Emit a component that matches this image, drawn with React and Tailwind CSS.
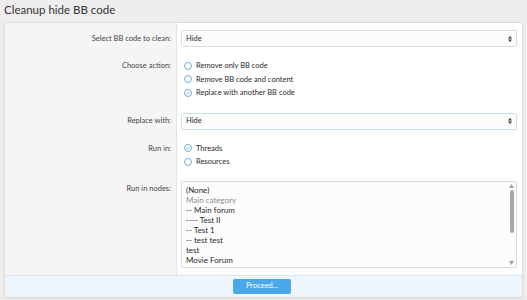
import React from "react";

const Radio = ({ checked, label }) => (
  <label className="flex items-center h-[13.5px] gap-[4px]">
    <span className="w-[8px] h-[8px] rounded-full border border-[#6fb0dc] bg-white flex items-center justify-center">
      {checked && (
        <svg width="6" height="6" viewBox="0 0 6 6">
          <path d="M1.2 3.1 L2.5 4.3 L4.8 1.8" fill="none" stroke="#6fb0dc" strokeWidth="0.9" />
        </svg>
      )}
    </span>
    <span>{label}</span>
  </label>
);

const Select = ({ value, focus }) => (
  <div
    className={`h-[17px] flex items-center justify-between border rounded-[2px] bg-[#fcfcfc] pl-[4px] pr-[4px] ${
      focus ? "border-[#c9e0ea]" : "border-[#dcdcdc]"
    }`}
  >
    <span>{value}</span>
    <svg width="4" height="6" viewBox="0 0 4 6">
      <path d="M0 2.5 L2 0 L4 2.5 Z M0 3.5 L2 6 L4 3.5 Z" fill="#333" />
    </svg>
  </div>
);

const Row = ({ label, children, className = "" }) => (
  <div className={`grid grid-cols-[172px_1fr] ${className}`}>
    <div className="bg-[#f5f5f5] border-r border-[#e4e4e4] text-right pr-[5px] text-[#444]">
      {label}
    </div>
    <div className="pl-[4px] pr-[5px]">{children}</div>
  </div>
);

const nodes = [
  { t: "(None)" },
  { t: "Main category", muted: true },
  { t: "-- Main forum" },
  { t: "---- Test II" },
  { t: "-- Test 1" },
  { t: "-- test test" },
  { t: "test" },
  { t: "Movie Forum" },
];

export default function App() {
  return (
    <div className="w-[527px] h-[300px] bg-[#eeeeee] overflow-hidden text-[#2a2a2a] text-[7.5px] font-['Lato',sans-serif]">
      <h1 className="px-[4px] h-[22px] flex items-center text-[11.5px] text-[#333] leading-none pb-[2px]">
        Cleanup hide BB code
      </h1>
      <div className="mx-[4px] border border-[#dcdcdc] bg-white shadow-[0_1px_2px_rgba(0,0,0,0.06)]">
        <Row
          label={<div className="h-[17px] flex items-center justify-end">Select BB code to clean:</div>}
          className="[&>div]:pt-[7px] [&>div]:pb-[6px]"
        >
          <Select value="Hide" />
        </Row>
        <Row
          label={<div className="h-[13.5px] flex items-center justify-end">Choose action:</div>}
          className="[&>div]:pt-[6px] [&>div]:pb-[7px]"
        >
          <div className="pl-[3px]">
            <Radio label="Remove only BB code" />
            <Radio label="Remove BB code and content" />
            <Radio checked label="Replace with another BB code" />
          </div>
        </Row>
        <Row
          label={<div className="h-[17px] flex items-center justify-end">Replace with:</div>}
          className="[&>div]:pt-[6px] [&>div]:pb-[6px]"
        >
          <Select value="Hide" focus />
        </Row>
        <Row
          label={<div className="h-[13.5px] flex items-center justify-end">Run in:</div>}
          className="[&>div]:pt-[6px] [&>div]:pb-[6px]"
        >
          <div className="pl-[3px]">
            <Radio checked label="Threads" />
            <Radio label="Resources" />
          </div>
        </Row>
        <Row
          label={<div className="h-[13px] pt-[3px] flex items-center justify-end">Run in nodes:</div>}
          className="[&>div]:pt-[6px] [&>div]:pb-[7px]"
        >
          <div className="h-[87px] border border-[#dcdcdc] rounded-[2px] bg-[#fcfcfc] flex">
            <div className="flex-1 pl-[4px] pt-[3px] leading-[10px] text-[8px]">
              {nodes.map((n) => (
                <div key={n.t} className={n.muted ? "text-[#8c8c8c]" : ""}>
                  {n.t}
                </div>
              ))}
            </div>
            <div className="w-[9px] flex flex-col items-center py-[2px]">
              <svg width="5" height="4" viewBox="0 0 5 4">
                <path d="M0 4 L2.5 0 L5 4 Z" fill="#a0a0a0" />
              </svg>
              <div className="w-[4px] h-[43px] mt-[2px] rounded-full bg-[#a8a8a8]" />
              <div className="flex-1" />
              <svg width="5" height="4" viewBox="0 0 5 4">
                <path d="M0 0 L2.5 4 L5 0 Z" fill="#a0a0a0" />
              </svg>
            </div>
          </div>
        </Row>
        <div className="h-[22px] bg-[#edf5fd] border-t border-[#d8e4ef] grid grid-cols-[228px_1fr] items-center">
          <div />
          <div>
            <button className="w-[58px] h-[15px] rounded-[2px] bg-[#4aa7ea] text-white text-[7.5px] leading-none">
              Proceed...
            </button>
          </div>
        </div>
      </div>
    </div>
  );
}
